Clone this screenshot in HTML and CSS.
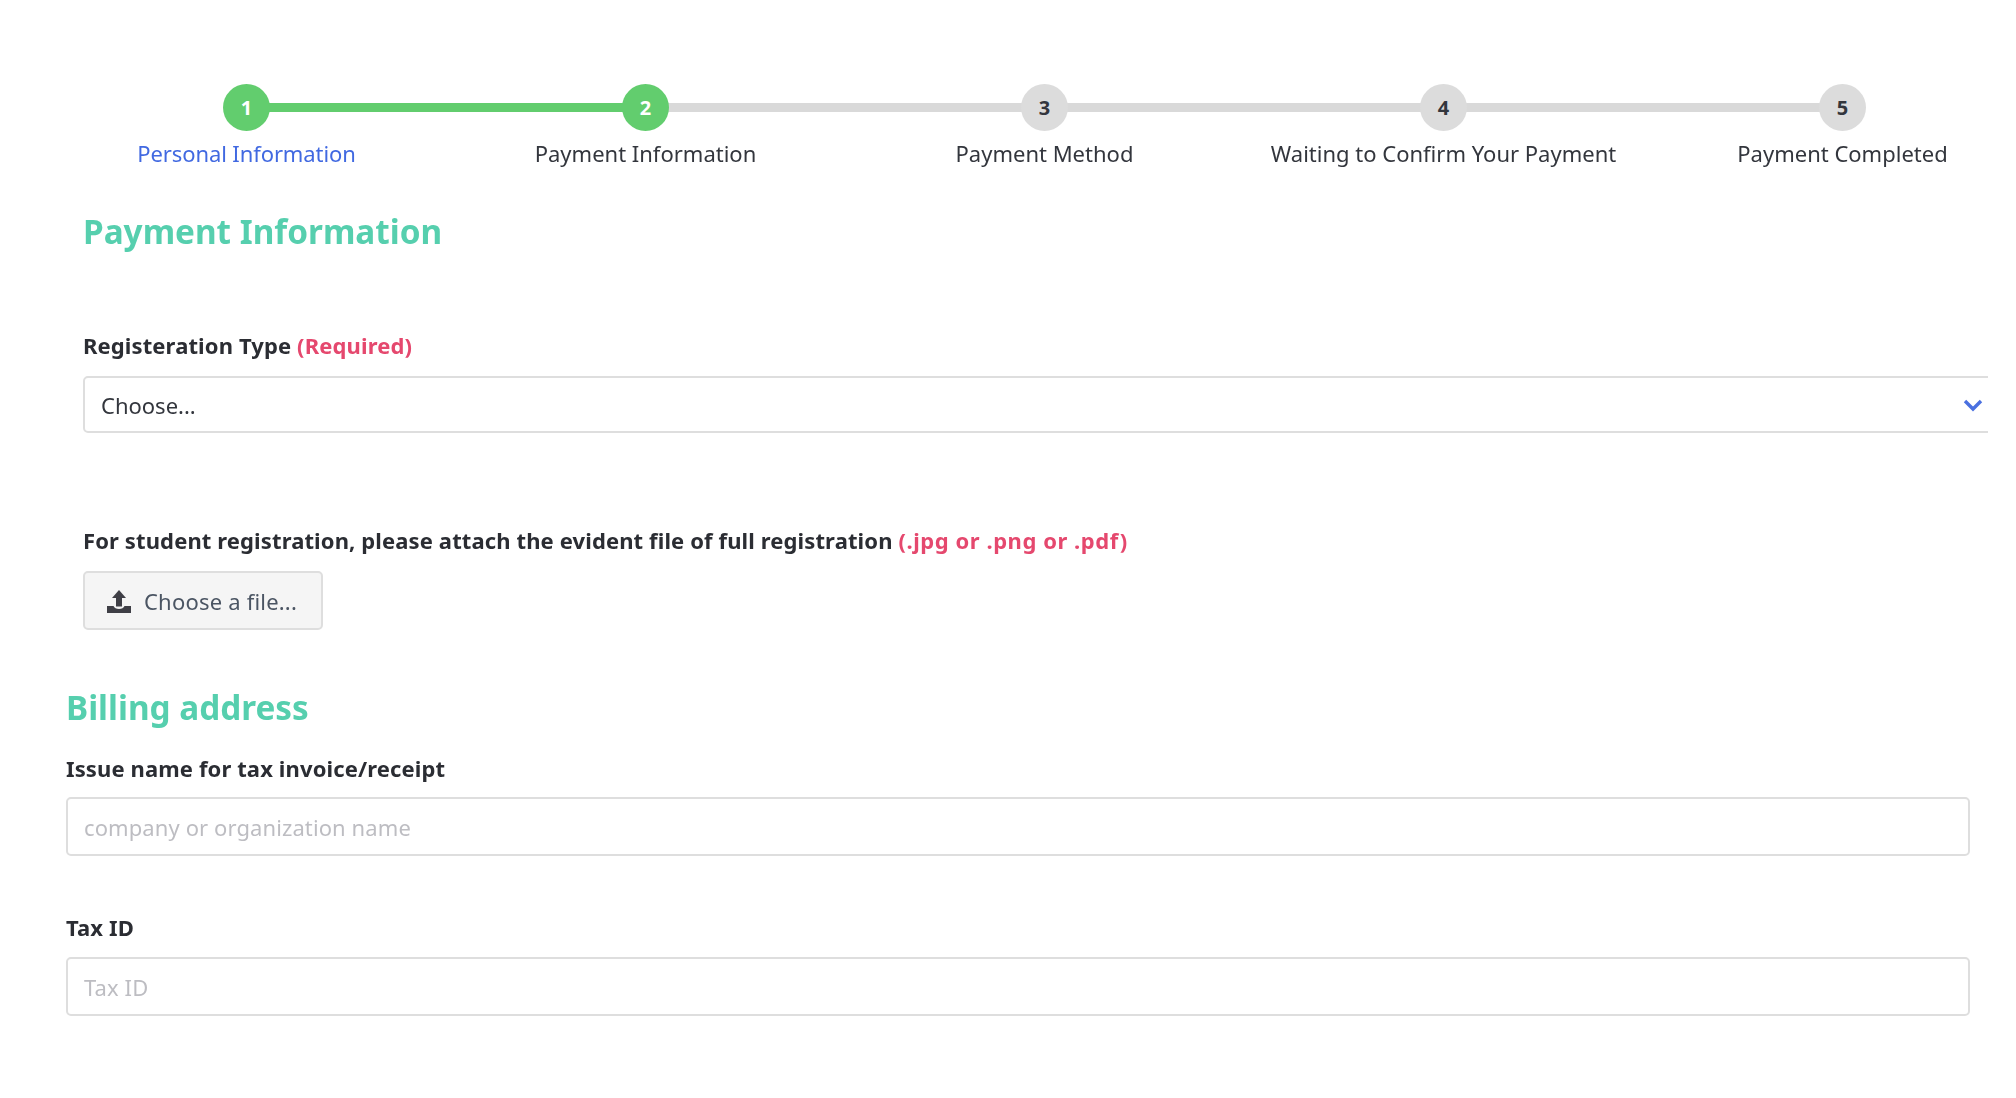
FILE: index.html
```html
<!DOCTYPE html>
<html lang="en">
<head>
<meta charset="utf-8">
<title>Payment Information</title>
<link rel="stylesheet" href="styles.css">
</head>
<body>
<main class="page">
  <ol class="stepper">
    <li class="step done"><span class="dot">1</span><span class="step-label link">Personal Information</span></li>
    <li class="step current"><span class="dot">2</span><span class="step-label">Payment Information</span></li>
    <li class="step"><span class="dot">3</span><span class="step-label">Payment Method</span></li>
    <li class="step"><span class="dot">4</span><span class="step-label">Waiting to Confirm Your Payment</span></li>
    <li class="step last"><span class="dot">5</span><span class="step-label">Payment Completed</span></li>
  </ol>

  <section class="payment">
    <h2 class="heading">Payment Information</h2>
    <label class="field-label type-label">Registeration Type <span class="req">(Required)</span></label>
    <div class="select">
      <span>Choose...</span>
      <svg class="chevron" viewBox="0 0 20 14" width="20" height="14"><path d="M2 3l8 8 8-8" fill="none" stroke="#4a70e0" stroke-width="3.4"/></svg>
    </div>
    <label class="field-label file-label">For student registration, please attach the evident file of full registration <span class="req req-file">(.jpg or .png or .pdf)</span></label>
    <button class="file-btn" type="button">
      <svg class="upload" viewBox="0 0 24 24" width="24" height="24"><path d="M12 1l7 8h-4v8.500H9V9H5z" fill="#3f3f46"/><path d="M0 17h6.500c.8 2 2.800 3 5.500 3s4.700-1 5.500-3H24v7H0z" fill="#3f3f46"/></svg>
      <span>Choose a file...</span>
    </button>
  </section>

  <section class="billing">
    <h2 class="heading billing-heading">Billing address</h2>
    <label class="field-label issue-label">Issue name for tax invoice/receipt</label>
    <input class="text-input" type="text" placeholder="company or organization name">
    <label class="field-label tax-label">Tax ID</label>
    <input class="text-input" type="text" placeholder="Tax ID">
  </section>
</main>
</body>
</html>
```

FILE: styles.css
```css
* { box-sizing: border-box; }
html, body { margin: 0; padding: 0; background: #fff; }
body {
  font-family: "Noto Sans", "Open Sans", sans-serif;
  color: #33363d;
  overflow: hidden;
  height: 1098px;
}
.page {
  width: 1988px;
  overflow: hidden;
  filter: blur(0.6px);
}
.stepper {
  list-style: none;
  margin: 0;
  padding: 84px 0 0 47px;
  display: grid;
  grid-template-columns: repeat(5, 399px);
  width: 2100px;
}
.step {
  position: relative;
  display: flex;
  flex-direction: column;
  align-items: center;
  gap: 9px;
}
.step::after {
  content: "";
  position: absolute;
  top: 19px;
  left: 50%;
  width: 100%;
  height: 9px;
  background: #d9d9d9;
}
.step.done::after { background: #62cd6e; }
.step.last::after { display: none; }
.dot {
  position: relative;
  z-index: 1;
  width: 47px;
  height: 47px;
  border-radius: 50%;
  background: #dcdcdc;
  color: #33363d;
  font-size: 20px;
  font-weight: 700;
  display: flex;
  align-items: center;
  justify-content: center;
}
.done .dot, .current .dot { background: #62cd6e; color: #fff; }
.step-label { font-size: 22px; line-height: 27px; white-space: nowrap; }
.step-label.link { color: #4169e1; letter-spacing: -0.1px; }

.payment { padding: 0 0 0 83px; width: 2000px; }
.heading {
  margin: 0;
  font-size: 33.3px;
  line-height: 44px;
  font-weight: 700;
  color: #56cfae;
}
.payment .heading { margin-top: 42px; }
.field-label {
  display: block;
  font-size: 22px;
  line-height: 27px;
  font-weight: 700;
  color: #2b2d33;
  letter-spacing: 0.12px;
}
.type-label { margin-top: 79px; }
.req { color: #e5486e; }
.req-file { letter-spacing: 0.55px; }
.select {
  margin-top: 17px;
  height: 57px;
  width: 1950px;
  border: 2px solid #dedede;
  border-radius: 5px;
  padding: 0 16px;
  display: flex;
  align-items: center;
  font-size: 22px;
  background: #fff;
}
.chevron { position: absolute; left: 1963px; }
.file-label { margin-top: 94px; }
.file-btn {
  margin-top: 17px;
  width: 240px;
  height: 59px;
  display: flex;
  align-items: center;
  gap: 13px;
  padding: 0 0 0 22px;
  background: #f5f5f5;
  border: 2px solid #dedede;
  border-radius: 5px;
  font: inherit;
  font-size: 22px;
  letter-spacing: 0.2px;
  color: #4b5563;
}
.billing { padding: 0 18px 0 66px; }
.billing-heading { margin-top: 55px; }
.issue-label { margin-top: 26px; }
.text-input {
  display: block;
  width: 100%;
  height: 59px;
  margin-top: 15px;
  padding: 0 16px;
  border: 2px solid #dedede;
  border-radius: 5px;
  font: inherit;
  font-size: 22px;
  letter-spacing: 0.1px;
  background: #fff;
}
.text-input::placeholder { color: #bdbdc2; opacity: 1; }
.tax-label { margin-top: 58px; margin-bottom: 16px; }
```
